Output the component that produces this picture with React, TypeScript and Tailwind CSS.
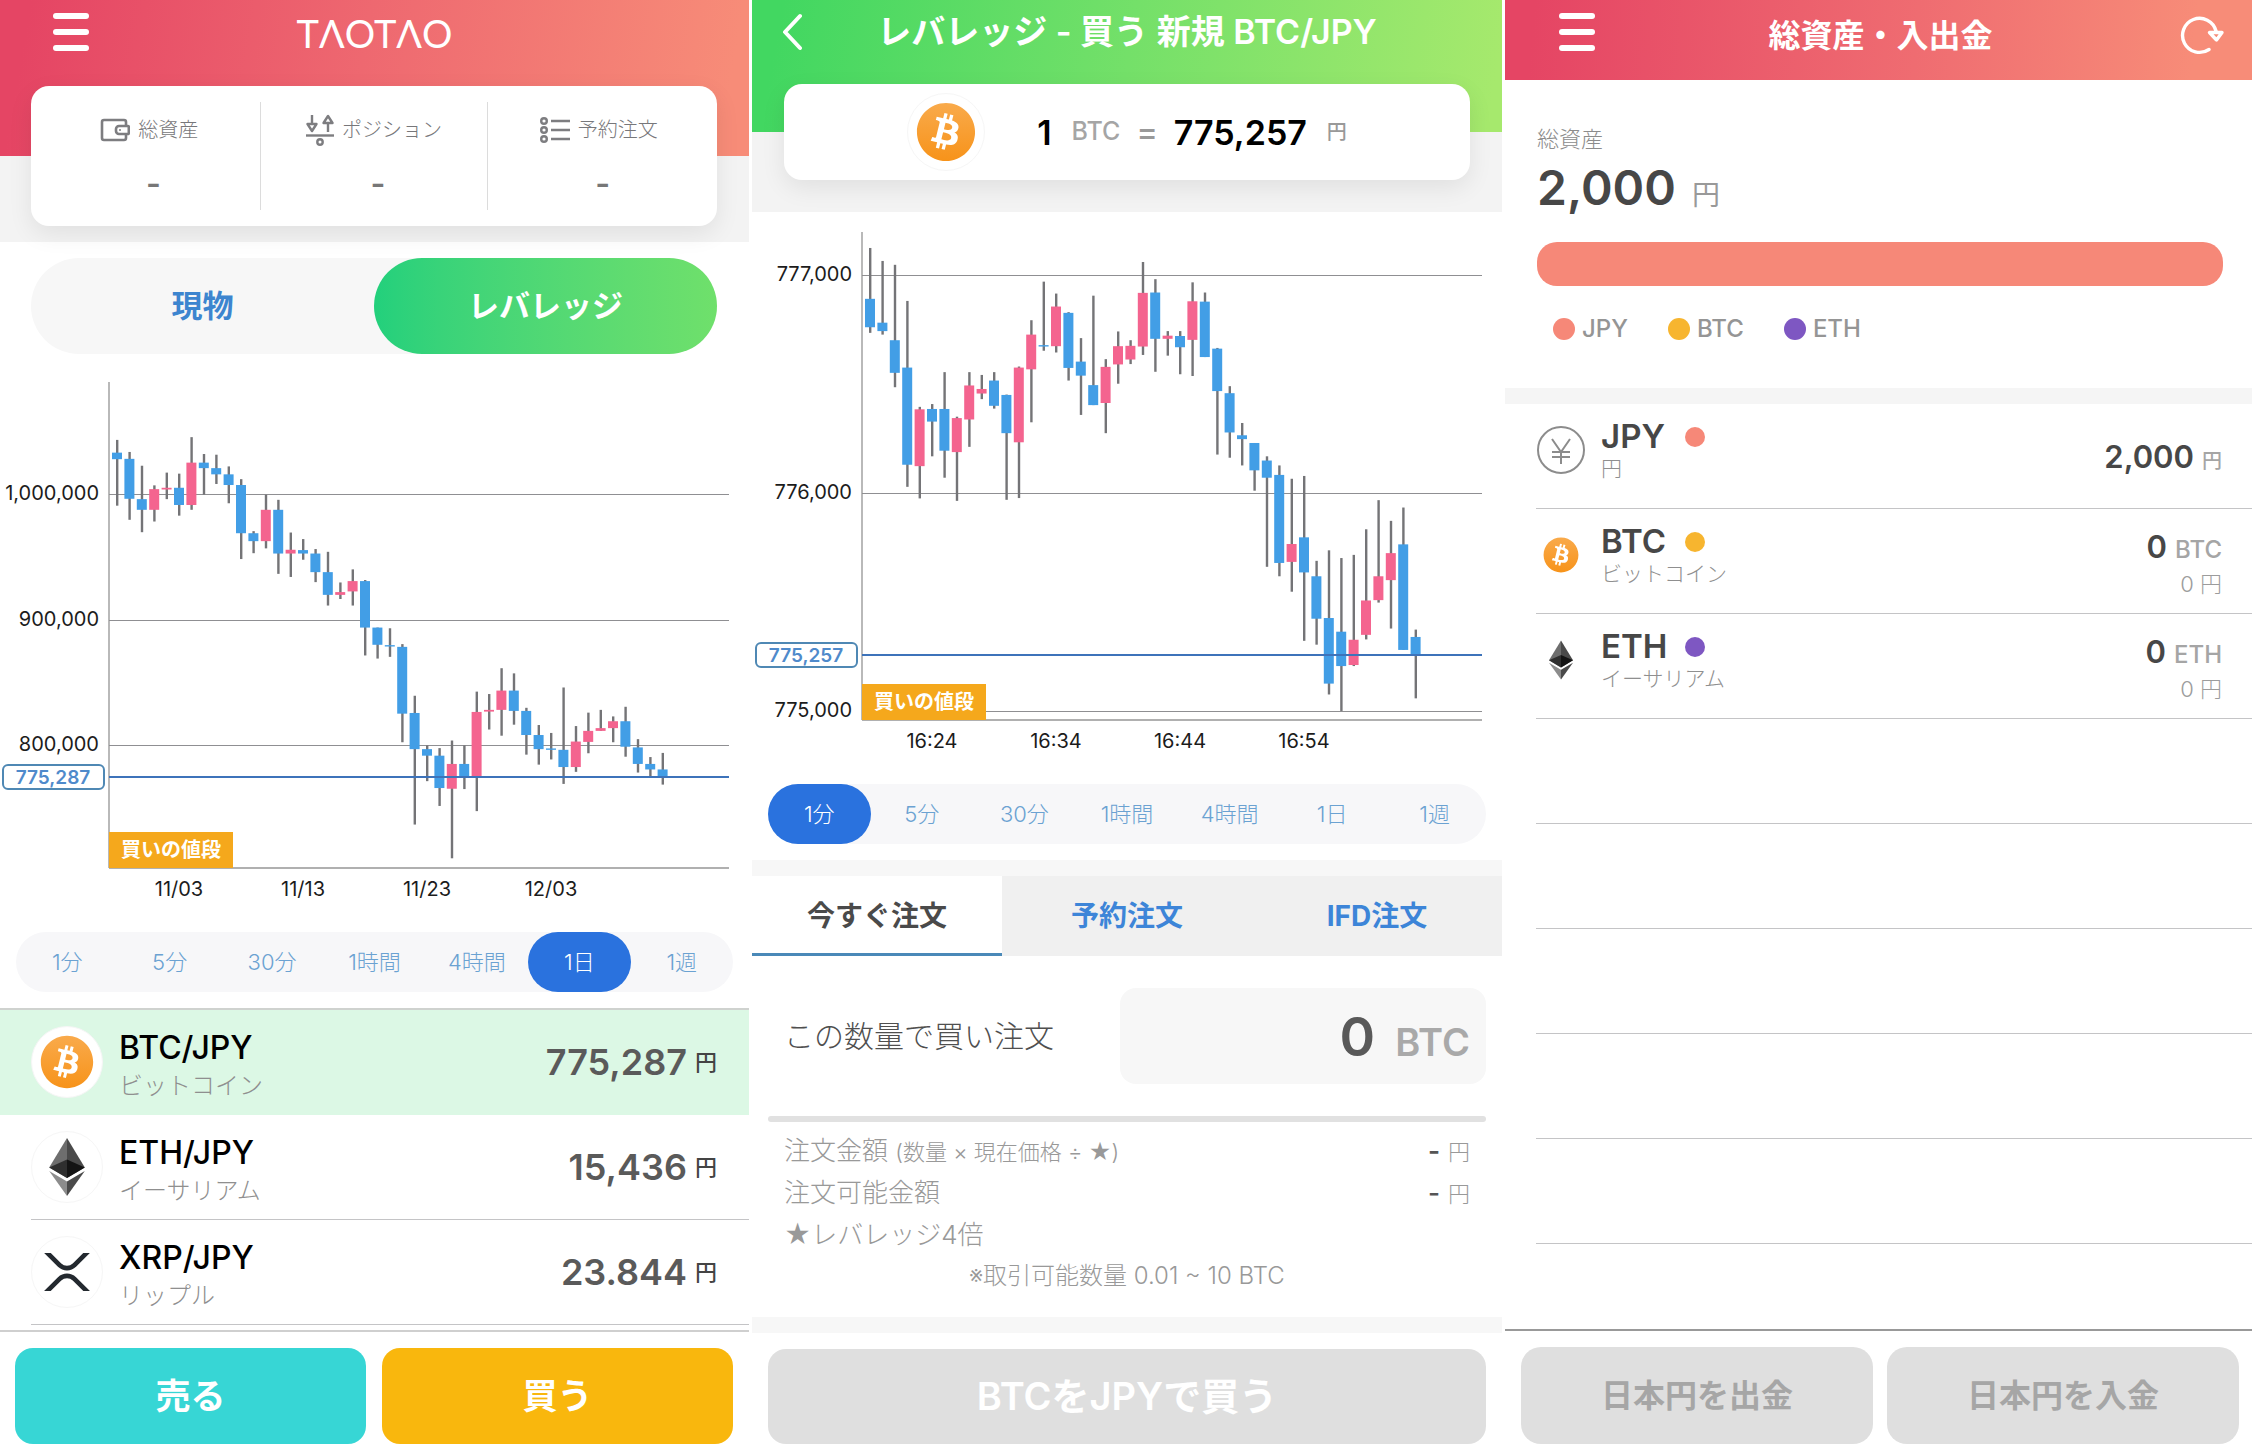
import React, { useState } from "react";
import { FaBitcoin } from "react-icons/fa";

type Dir = "up" | "down";
// direction, high, body top, body bottom, low
type Candle = [Dir, number, number, number, number];

interface ChartProps {
  label: string;
  width: number;
  height: number;
  left: number;
  top: number;
  bottom: number;
  unit: number; // candle units per chart pixel
  grid: { y: number; text: string }[];
  price: { y: number; text: string };
  ticks: string[];
  candles: Candle[];
}

const RANGES = ["1分", "5分", "30分", "1時間", "4時間", "1日", "1週"];

const STEP = 12.4;

const dailyCandles: Candle[] = [
  ["down", 203, 240, 259, 394],
  ["down", 238, 258, 374, 435],
  ["down", 278, 375, 406, 471],
  ["up", 335, 346, 406, 440],
  ["up", 298, 342, 347, 375],
  ["down", 301, 342, 392, 423],
  ["up", 195, 269, 392, 406],
  ["down", 244, 269, 285, 362],
  ["down", 246, 285, 303, 331],
  ["down", 280, 303, 334, 387],
  ["down", 317, 334, 474, 549],
  ["down", 468, 474, 497, 532],
  ["up", 362, 406, 497, 518],
  ["down", 377, 406, 533, 592],
  ["up", 472, 522, 533, 601],
  ["down", 491, 523, 533, 551],
  ["down", 520, 533, 587, 616],
  ["down", 528, 587, 653, 684],
  ["up", 617, 645, 653, 665],
  ["up", 579, 613, 643, 684],
  ["down", 610, 613, 748, 829],
  ["down", 748, 748, 798, 838],
  ["down", 750, 799, 803, 833],
  ["down", 796, 804, 998, 1081],
  ["down", 946, 996, 1101, 1320],
  ["down", 1090, 1101, 1120, 1194],
  ["down", 1098, 1120, 1214, 1266],
  ["up", 1076, 1144, 1216, 1418],
  ["down", 1090, 1144, 1181, 1217],
  ["up", 934, 993, 1179, 1281],
  ["up", 941, 987, 992, 1044],
  ["up", 866, 931, 987, 1062],
  ["down", 881, 931, 990, 1030],
  ["down", 981, 990, 1060, 1117],
  ["down", 1031, 1060, 1101, 1146],
  ["down", 1054, 1099, 1103, 1131],
  ["down", 922, 1103, 1153, 1202],
  ["up", 1034, 1079, 1153, 1167],
  ["up", 995, 1048, 1080, 1113],
  ["up", 987, 1040, 1048, 1048],
  ["up", 1006, 1020, 1040, 1081],
  ["down", 978, 1020, 1094, 1123],
  ["down", 1072, 1096, 1144, 1169],
  ["down", 1124, 1144, 1160, 1180],
  ["down", 1112, 1160, 1181, 1204],
];

const minuteCandles: Candle[] = [
  ["down", 94, 239, 320, 336],
  ["down", 131, 307, 331, 341],
  ["down", 142, 357, 450, 491],
  ["down", 245, 435, 712, 775],
  ["up", 547, 554, 716, 808],
  ["down", 539, 553, 589, 688],
  ["down", 448, 553, 672, 749],
  ["up", 575, 579, 676, 815],
  ["up", 448, 486, 583, 661],
  ["up", 456, 496, 509, 525],
  ["down", 448, 472, 544, 552],
  ["down", 512, 513, 622, 812],
  ["up", 432, 435, 648, 807],
  ["up", 300, 341, 440, 591],
  ["down", 190, 371, 375, 387],
  ["up", 224, 261, 374, 392],
  ["down", 277, 279, 436, 472],
  ["down", 351, 418, 458, 570],
  ["down", 230, 485, 542, 542],
  ["up", 411, 433, 536, 622],
  ["up", 332, 374, 426, 481],
  ["up", 357, 373, 412, 425],
  ["up", 134, 222, 375, 399],
  ["down", 183, 221, 353, 447],
  ["up", 331, 344, 353, 401],
  ["down", 331, 345, 377, 454],
  ["up", 192, 246, 356, 459],
  ["down", 221, 247, 405, 405],
  ["down", 379, 381, 502, 683],
  ["down", 488, 508, 620, 692],
  ["down", 593, 628, 639, 714],
  ["down", 650, 650, 728, 786],
  ["down", 688, 700, 749, 1003],
  ["down", 714, 741, 992, 1030],
  ["up", 752, 938, 989, 1074],
  ["down", 744, 919, 1019, 1214],
  ["down", 986, 1030, 1151, 1225],
  ["down", 956, 1149, 1336, 1367],
  ["down", 978, 1188, 1286, 1414],
  ["up", 969, 1211, 1283, 1286],
  ["up", 896, 1099, 1197, 1210],
  ["up", 813, 1030, 1098, 1105],
  ["up", 872, 964, 1041, 1179],
  ["down", 834, 939, 1240, 1240],
  ["down", 1182, 1203, 1254, 1378],
];

const CandleChart: React.FC<ChartProps> = ({
  label,
  width,
  height,
  left,
  top,
  bottom,
  unit,
  grid,
  price,
  ticks,
  candles,
}) => {
  const right = left + 620;
  return (
    <svg
      role="img"
      aria-label={label}
      viewBox={`0 0 ${width} ${height}`}
      className="block w-full h-auto"
    >
      <rect x={left - 1} y={top} width="2" height={bottom - top} fill="#b9b9b9" />
      {grid.map((g) => (
        <g key={g.text}>
          <rect x={left} y={g.y} width={right - left} height="1" fill="#8f8f92" />
          <text
            x={left - 10}
            y={g.y + 6}
            textAnchor="end"
            className="text-[20px] fill-[#1c1c1c]"
          >
            {g.text}
          </text>
        </g>
      ))}
      {candles.map(([dir, high, bodyTop, bodyBottom, low], i) => {
        const x = left + 8 + i * STEP;
        return (
          <g key={i}>
            <rect
              x={x - 1}
              y={high / unit}
              width="2.4"
              height={(low - high) / unit}
              fill="#747477"
            />
            <rect
              x={x - 5}
              y={bodyTop / unit}
              width="10"
              height={(bodyBottom - bodyTop) / unit}
              fill={dir === "up" ? "#f4648f" : "#429ee6"}
            />
          </g>
        );
      })}
      <rect x={left} y={bottom - 1} width={right - left} height="2" fill="#b0b0b0" />
      <rect x={left} y={price.y - 1} width={right - left} height="2" fill="#3d73ba" />
      <rect
        x={left - 106}
        y={price.y - 12}
        width="101"
        height="24"
        rx="5"
        fill="#fff"
        stroke="#4f88b4"
        strokeWidth="2"
      />
      <text
        x={left - 56}
        y={price.y + 7}
        textAnchor="middle"
        className="text-[19px] font-semibold fill-[#4f8acb]"
      >
        {price.text}
      </text>
      <rect x={left} y={bottom - 36} width="124" height="36" fill="#f5a81c" />
      <text
        x={left + 62}
        y={bottom - 11}
        textAnchor="middle"
        className="text-[20px] font-bold fill-white"
      >
        買いの値段
      </text>
      {ticks.map((t, i) => (
        <text
          key={t}
          x={left + 70 + i * 124}
          y={bottom + 28}
          textAnchor="middle"
          className="text-[20px] fill-[#1c1c1c]"
        >
          {t}
        </text>
      ))}
    </svg>
  );
};

const BitcoinIcon: React.FC<{ className: string }> = ({ className }) => (
  <FaBitcoin className={className} fill="url(#btc-fill)" aria-hidden="true" />
);

const EthereumIcon: React.FC<{ className: string }> = ({ className }) => (
  <svg viewBox="0 0 256 417" className={className} aria-hidden="true">
    <path fill="#4a4a4a" d="M128 0v288l128-76z" />
    <path fill="#6e6e6e" d="M128 0L0 212l128 76z" />
    <path fill="#4a4a4a" d="M128 312v105l128-180z" />
    <path fill="#8c8c8c" d="M128 417V312L0 237z" />
    <path fill="#141414" d="M128 288l128-76-128-58z" />
    <path fill="#2f2f2f" d="M0 212l128 76V154z" />
  </svg>
);

const RippleIcon: React.FC<{ className: string }> = ({ className }) => (
  <svg viewBox="0 0 512 424" className={className} fill="#23292f" aria-hidden="true">
    <path d="M437 0h74L357 152.48c-55.77 55.19-146.19 55.19-202 0L.94 0H75l117 115.83a91.11 91.11 0 0 0 127.91 0z" />
    <path d="M74.05 424H0l155-153.42c55.77-55.19 146.19-55.19 202 0L512 424h-74L320 307.23a91.11 91.11 0 0 0-127.91 0z" />
  </svg>
);

const WalletIcon = () => (
  <svg viewBox="0 0 30 24" className="w-[30px] h-6" fill="none" stroke="#7d7d80" strokeWidth="2.6" aria-hidden="true">
    <path d="M26 7V4a2 2 0 0 0-2-2H4a2 2 0 0 0-2 2v16a2 2 0 0 0 2 2h20a2 2 0 0 0 2-2v-3" />
    <path d="M28 8h-9a3 3 0 0 0-3 3v2a3 3 0 0 0 3 3h9a.8.8 0 0 0 .8-.8V8.8A.8.8 0 0 0 28 8z" />
    <circle cx="20" cy="12" r="1" fill="#7d7d80" stroke="none" />
  </svg>
);

const PositionIcon = () => (
  <svg viewBox="0 0 28 32" className="w-7 h-8" fill="none" stroke="#7d7d80" strokeWidth="2.4" strokeLinejoin="round" aria-hidden="true">
    <path d="M6 1v9M1.5 10h9L6 17z" />
    <path d="M22 18V9M17.5 9h9L22 2z" />
    <path d="M0 21.5h28" />
    <circle cx="14" cy="28" r="2.7" />
  </svg>
);

const OrdersIcon = () => (
  <svg viewBox="0 0 30 28" className="w-[30px] h-7" fill="none" stroke="#7d7d80" strokeWidth="2.4" aria-hidden="true">
    <circle cx="4" cy="5" r="2.8" />
    <circle cx="4" cy="14" r="2.8" />
    <circle cx="4" cy="23" r="2.8" />
    <path d="M11 5h19M11 14h19M11 23h19" />
  </svg>
);

const MenuButton = () => (
  <button type="button" aria-label="メニュー" className="flex flex-col gap-2.5 w-9">
    <span className="h-1.5 rounded-sm bg-white" />
    <span className="h-1.5 rounded-sm bg-white" />
    <span className="h-1.5 rounded-sm bg-white" />
  </button>
);

const RangeBar: React.FC<{ initial: string }> = ({ initial }) => {
  const [range, setRange] = useState(initial);
  return (
    <div className="mx-4 h-[60px] grid grid-cols-7 rounded-full bg-[#f7f7f9]">
      {RANGES.map((r) => (
        <button
          key={r}
          type="button"
          aria-pressed={r === range}
          onClick={() => setRange(r)}
          className={`rounded-full text-[22px] font-light ${
            r === range ? "bg-[#2a72de] text-white" : "text-[#6ba2d2]"
          }`}
        >
          {r}
        </button>
      ))}
    </div>
  );
};

const summary = [
  { label: "総資産", icon: <WalletIcon />, pad: "pl-4" },
  { label: "ポジション", icon: <PositionIcon />, pad: "pl-2 border-x border-[#dcdcdc]" },
  { label: "予約注文", icon: <OrdersIcon />, pad: "" },
];

const pairs = [
  {
    pair: "BTC/JPY",
    name: "ビットコイン",
    price: "775,287",
    icon: <BitcoinIcon className="size-[54px]" />,
  },
  {
    pair: "ETH/JPY",
    name: "イーサリアム",
    price: "15,436",
    icon: <EthereumIcon className="w-9 h-[58px]" />,
  },
  {
    pair: "XRP/JPY",
    name: "リップル",
    price: "23.844",
    icon: <RippleIcon className="w-[46px] h-[38px]" />,
  },
];

const HomeScreen = () => {
  const [market, setMarket] = useState("レバレッジ");

  return (
    <section className="min-h-screen flex flex-col min-w-0 bg-white">
      <div className="bg-[#f3f3f3] pb-4">
        <header className="h-[156px] pt-[13px] px-[53px] grid grid-cols-[36px_1fr_36px] items-start bg-[linear-gradient(100deg,#e54564_4%,#ee6870_48%,#f78c78_96%)]">
          <MenuButton />
          <h1 className="text-center text-white text-[38px] leading-[40px] font-['Lato','Inter',sans-serif]">
            TΛOTΛO
          </h1>
        </header>
        <div className="-mt-[70px] ml-[31px] mr-8 h-[140px] py-4 grid grid-cols-3 rounded-[18px] bg-white shadow-[0_8px_24px_rgba(0,0,0,0.08)]">
          {summary.map((s) => (
            <div key={s.label} className={`flex flex-col items-center ${s.pad}`}>
              <div className="h-14 pr-2 flex items-center gap-2 text-[20px] font-light text-[#77777a]">
                {s.icon}
                {s.label}
              </div>
              <div className="text-[32px] leading-[52px] font-semibold text-[#777]">-</div>
            </div>
          ))}
        </div>
      </div>

      <div className="mt-4 ml-[31px] mr-8 h-24 grid grid-cols-2 rounded-full bg-[#f7f7f7] text-[31px] font-bold">
        {["現物", "レバレッジ"].map((m) => (
          <button
            key={m}
            type="button"
            aria-pressed={m === market}
            onClick={() => setMarket(m)}
            className={`rounded-full ${
              m === market
                ? "text-white bg-linear-to-r from-[#22d07c] to-[#6fe06b]"
                : "text-[#3d85cf]"
            }`}
          >
            {m}
          </button>
        ))}
      </div>

      <div className="mt-4 mb-[22px]">
        <CandleChart
          label="BTC/JPY 1日"
          width={749}
          height={540}
          left={109}
          top={12}
          bottom={498}
          unit={2.904}
          grid={[
            { y: 124, text: "1,000,000" },
            { y: 250, text: "900,000" },
            { y: 375, text: "800,000" },
          ]}
          price={{ y: 407, text: "775,287" }}
          ticks={["11/03", "11/13", "11/23", "12/03"]}
          candles={dailyCandles}
        />
      </div>
      <RangeBar initial="1日" />

      <ul className="mt-4 border-t-2 border-[#cfd2cf]">
        {pairs.map((p, i) => (
          <li key={p.pair} className={i === 0 ? "bg-[#dcf8e5]" : ""}>
            <button type="button" className="block w-full pl-[31px] text-left">
              <span
                className={`h-[105px] pr-8 flex items-center border-b ${
                  i === 0 ? "border-transparent" : "border-[#c4c4c6]"
                }`}
              >
                <span className="size-[72px] mr-4 flex items-center justify-center rounded-full bg-white border border-[#f6f6f6]">
                  {p.icon}
                </span>
                <span className="flex-1 pt-2">
                  <span className="block text-[32px] leading-10 font-medium text-black">
                    {p.pair}
                  </span>
                  <span className="block text-[24px] leading-9 font-light text-[#8f8f8f]">
                    {p.name}
                  </span>
                </span>
                <span className="text-[36px] font-semibold text-[#5a5a5a]">{p.price}</span>
                <span className="ml-2 text-[22px] font-medium text-[#444]">円</span>
              </span>
            </button>
          </li>
        ))}
      </ul>

      <footer className="mt-auto h-[117px] pl-[15px] pr-4 pt-4 pb-[3px] grid grid-cols-2 gap-4 border-t-2 border-[#cfcfcf] text-white text-[35px] font-bold">
        <button type="button" className="rounded-[18px] bg-[#37d6d5]">
          売る
        </button>
        <button type="button" className="rounded-[18px] bg-[#f9b70d]">
          買う
        </button>
      </footer>
    </section>
  );
};

const ORDER_TABS = ["今すぐ注文", "予約注文", "IFD注文"];

const OrderScreen = () => {
  const [tab, setTab] = useState(ORDER_TABS[0]);
  const [amount, setAmount] = useState("0");

  return (
    <section className="min-h-screen flex flex-col min-w-0 bg-white">
      <div className="bg-[#f3f3f3] pb-8">
        <header className="h-[132px] pt-3 px-[30px] grid grid-cols-[20px_1fr_20px] items-start bg-[linear-gradient(100deg,#42d761_4%,#74e069_50%,#a6e96d_98%)]">
          <button type="button" aria-label="戻る">
            <svg viewBox="0 0 20 40" className="w-5 h-10" fill="none" stroke="#fff" strokeWidth="4" strokeLinecap="round" strokeLinejoin="round">
              <path d="M18 4L3 20l15 16" />
            </svg>
          </button>
          <h2 className="text-center text-white text-[34px] leading-10 font-semibold">
            レバレッジ - 買う 新規 BTC/JPY
          </h2>
        </header>
        <div className="-mt-12 mx-8 h-24 flex items-center justify-center rounded-[18px] bg-white shadow-[0_8px_24px_rgba(0,0,0,0.08)]">
          <span className="size-[78px] mr-[52px] flex items-center justify-center rounded-full border border-[#f6f6f6]">
            <BitcoinIcon className="size-[60px]" />
          </span>
          <span className="text-[34px] font-semibold text-black">1</span>
          <span className="ml-5 text-[25px] font-medium text-[#a5a5a5]">BTC</span>
          <span className="mx-4 text-[32px] font-medium text-[#999]">=</span>
          <span className="text-[34px] font-semibold text-black">775,257</span>
          <span className="ml-5 text-[20px] font-medium text-[#999]">円</span>
        </div>
      </div>

      <div className="mt-[3px] mb-[19px]">
        <CandleChart
          label="BTC/JPY 1分"
          width={750}
          height={550}
          left={110}
          top={17}
          bottom={505}
          unit={2.851}
          grid={[
            { y: 60, text: "777,000" },
            { y: 278, text: "776,000" },
            { y: 496, text: "775,000" },
          ]}
          price={{ y: 440, text: "775,257" }}
          ticks={["16:24", "16:34", "16:44", "16:54"]}
          candles={minuteCandles}
        />
      </div>
      <RangeBar initial="1分" />

      <div role="tablist" className="mt-4 border-t-[16px] border-[#f7f7f7] grid grid-cols-3 h-24">
        {ORDER_TABS.map((t) => (
          <button
            key={t}
            type="button"
            role="tab"
            aria-selected={t === tab}
            onClick={() => setTab(t)}
            className={`pt-0.5 text-[28px] font-bold border-b-[3px] ${
              t === tab
                ? "bg-white text-[#4a4a4a] border-[#4a89b8]"
                : "bg-[#f0f0f0] text-[#3d85d8] border-[#f0f0f0]"
            }`}
          >
            {t}
          </button>
        ))}
      </div>

      <div className="mt-8 mx-4 pl-4 flex items-center justify-between">
        <label htmlFor="amount" className="text-[30px] font-light text-[#4f4f4f]">
          この数量で買い注文
        </label>
        <div className="w-[366px] h-24 px-4 flex items-baseline rounded-2xl bg-[#f7f7f7]">
          <input
            id="amount"
            value={amount}
            onChange={(e) => setAmount(e.target.value)}
            className="flex-1 min-w-0 h-24 text-right text-[54px] font-semibold text-[#595959] bg-transparent outline-none"
          />
          <span className="ml-5 text-[38px] font-semibold text-[#a9a9a9]">BTC</span>
        </div>
      </div>

      <div className="mt-8 mx-4 h-1.5 rounded-full bg-[#e1e1e1]" />
      <dl className="mt-2 px-8 text-[26px] leading-[42px] font-light text-[#999]">
        <div className="h-[42px] flex justify-between">
          <dt>
            注文金額 <small className="text-[22px]">(数量 × 現在価格 ÷ ★)</small>
          </dt>
          <dd className="text-[22px]">
            <span className="mr-2 text-[26px] font-semibold text-[#555]">-</span>円
          </dd>
        </div>
        <div className="h-[42px] flex justify-between">
          <dt>注文可能金額</dt>
          <dd className="text-[22px]">
            <span className="mr-2 text-[26px] font-medium text-[#555]">-</span>円
          </dd>
        </div>
        <div className="h-[42px]">
          <dt>★レバレッジ4倍</dt>
        </div>
      </dl>
      <p className="text-center text-[24px] leading-10 font-light text-[#999]">
        ※取引可能数量 0.01 ~ 10 BTC
      </p>

      <footer className="mt-auto h-[130px] px-4 pt-4 pb-[3px] border-t-[16px] border-[#f7f7f7] flex">
        <button
          type="button"
          className="flex-1 rounded-[18px] bg-[#dfdfdf] text-white text-[38px] font-semibold"
        >
          BTCをJPYで買う
        </button>
      </footer>
    </section>
  );
};

const legend = [
  { code: "JPY", dot: "bg-[#f68878]" },
  { code: "BTC", dot: "bg-[#f7b52f]" },
  { code: "ETH", dot: "bg-[#7e57c2]" },
];

const assets = [
  {
    code: "JPY",
    name: "円",
    dot: "bg-[#f68878]",
    icon: (
      <svg viewBox="0 0 48 48" className="size-12" fill="none" stroke="#8c8c8c" strokeWidth="2" aria-hidden="true">
        <circle cx="24" cy="24" r="23" />
        <path d="M15 13l9 13 9-13M24 26v12M15 26h18M15 31h18" />
      </svg>
    ),
    amount: "2,000",
    unit: "円",
  },
  {
    code: "BTC",
    name: "ビットコイン",
    dot: "bg-[#f7b52f]",
    icon: <BitcoinIcon className="size-9" />,
    amount: "0",
    unit: "BTC",
    yen: "0 円",
  },
  {
    code: "ETH",
    name: "イーサリアム",
    dot: "bg-[#7e57c2]",
    icon: <EthereumIcon className="w-6 h-10" />,
    amount: "0",
    unit: "ETH",
    yen: "0 円",
  },
];

const AssetsScreen = () => (
  <section className="min-h-screen flex flex-col min-w-0 bg-white">
    <header className="h-20 pl-[54px] pr-7 grid grid-cols-[44px_1fr_66px] items-start pt-[13px] bg-[linear-gradient(95deg,#e54564_4%,#ef6c71_55%,#f78c78_92%)]">
      <MenuButton />
      <h2 className="text-center text-white text-[32px] leading-[46px] font-bold">
        総資産・入出金
      </h2>
      <button type="button" aria-label="更新" className="justify-self-end">
        <svg viewBox="0 0 44 44" className="size-11" fill="none" stroke="#fff" strokeWidth="3.4" strokeLinecap="round" strokeLinejoin="round">
          <path d="M29 36.5A17 17 0 1 1 36 18" />
          <path d="M29.5 19.5H42L36.5 27z" />
        </svg>
      </button>
    </header>

    <div className="pt-[43px] pl-8 pr-[29px]">
      <p className="text-[22px] leading-8 font-light text-[#8c8c8c]">総資産</p>
      <p className="flex items-baseline text-[48px] leading-[66px] font-semibold text-[#474747]">
        2,000
        <span className="ml-4 text-[28px] font-normal text-[#999]">円</span>
      </p>
      <div className="mt-3.5 h-11 rounded-[20px] bg-[#f68878]" />
      <div className="mt-6 h-[38px] px-4 flex items-center gap-10">
        {legend.map((l) => (
          <span
            key={l.code}
            className="flex items-center gap-[7px] text-[24px] font-medium text-[#959595]"
          >
            <span className={`size-[22px] rounded-full ${l.dot}`} />
            {l.code}
          </span>
        ))}
      </div>
    </div>

    <div className="mt-10 h-4 bg-[#f5f5f5]" />
    <ul className="pl-[31px]">
      {assets.map((a) => (
        <li key={a.code} className="h-[105px] pr-[30px] flex items-start border-b border-[#c4c4c6]">
          <span className="w-[50px] h-[92px] flex items-center justify-center">{a.icon}</span>
          <div className="ml-[15px] pt-[13px]">
            <div className="h-10 flex items-center">
              <span className="w-[84px] text-[33px] font-semibold text-[#474747]">{a.code}</span>
              <span className={`size-5 rounded-full ${a.dot}`} />
            </div>
            <div className="text-[21px] leading-6 font-light text-[#8f8f8f]">{a.name}</div>
          </div>
          <div className={`ml-auto text-right ${a.yen ? "pt-[18px]" : "pt-[33px]"}`}>
            <div className="leading-10 text-[#474747]">
              <span className="text-[31px] font-semibold">{a.amount}</span>
              <span
                className={`ml-2 font-medium text-[#a5a5a5] ${
                  a.yen ? "text-[24px]" : "text-[20px]"
                }`}
              >
                {a.unit}
              </span>
            </div>
            {a.yen && (
              <div className="text-[22px] leading-6 font-light text-[#9c9c9c]">{a.yen}</div>
            )}
          </div>
        </li>
      ))}
      {Array.from({ length: 5 }, (_, i) => (
        <li key={i} aria-hidden="true" className="h-[105px] border-b border-[#c4c4c6]" />
      ))}
    </ul>

    <footer className="mt-auto h-[118px] pl-4 pr-[13px] pt-4 pb-[3px] grid grid-cols-2 gap-3.5 border-t-2 border-[#999] text-[32px] font-bold text-[#a6a6a6]">
      <button type="button" className="rounded-[20px] bg-[#dfdfdf]">
        日本円を出金
      </button>
      <button type="button" className="rounded-[20px] bg-[#dfdfdf]">
        日本円を入金
      </button>
    </footer>
  </section>
);

const App: React.FC = () => (
  <main
    lang="ja"
    className="grid grid-cols-[749fr_750fr_747fr] gap-[3px] bg-white font-['Inter','Noto_Sans_CJK_JP',sans-serif]"
  >
    <svg className="absolute size-0" aria-hidden="true">
      <defs>
        <linearGradient id="btc-fill" x1="0" y1="0" x2="0" y2="1">
          <stop offset="0" stopColor="#f9aa4b" />
          <stop offset="1" stopColor="#f7931a" />
        </linearGradient>
      </defs>
    </svg>
    <HomeScreen />
    <OrderScreen />
    <AssetsScreen />
  </main>
);

export default App;
